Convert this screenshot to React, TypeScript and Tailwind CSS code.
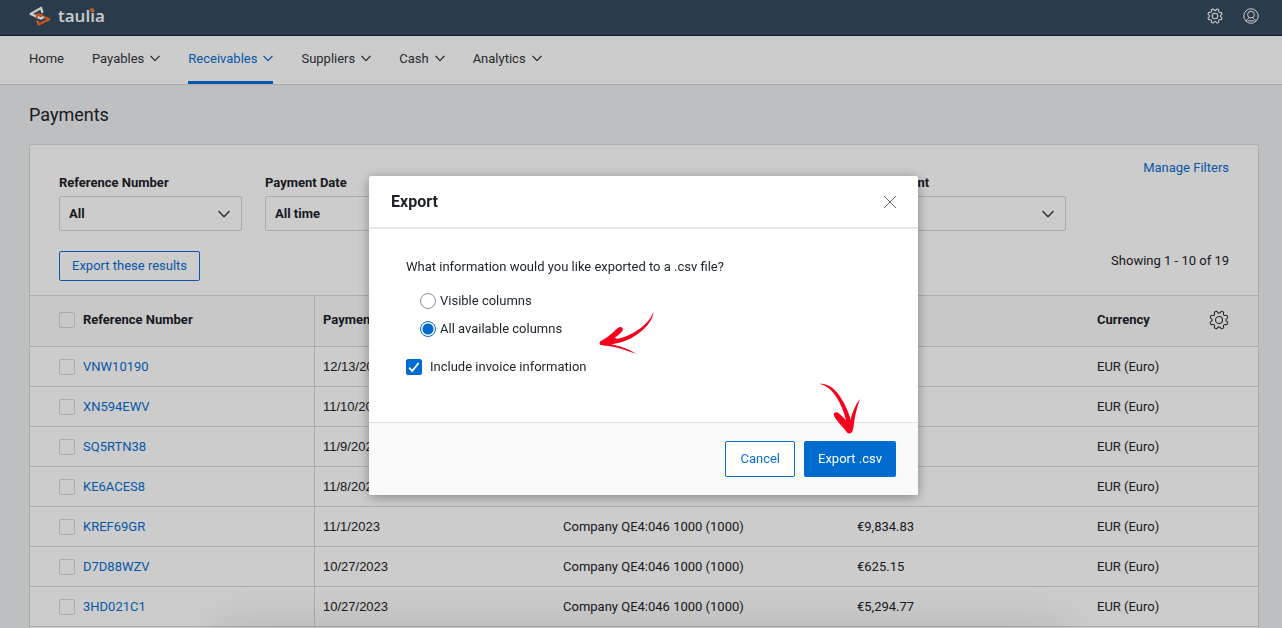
import { useState } from "react";
import clsx from "clsx";

interface Payment {
  reference: string;
  date: string;
  customer?: string;
  amount?: string;
  currency: string;
}

interface NavItem {
  label: string;
  menu: boolean;
}

const company = "Company QE4:046 1000 (1000)";
const euro = "EUR (Euro)";

const payments: Payment[] = [
  { reference: "VNW10190", date: "12/13/2023", currency: euro },
  { reference: "XN594EWV", date: "11/10/2023", currency: euro },
  { reference: "SQ5RTN38", date: "11/9/2023", currency: euro },
  { reference: "KE6ACES8", date: "11/8/2023", currency: euro },
  { reference: "KREF69GR", date: "11/1/2023", customer: company, amount: "€9,834.83", currency: euro },
  { reference: "D7D88WZV", date: "10/27/2023", customer: company, amount: "€625.15", currency: euro },
  { reference: "3HD021C1", date: "10/27/2023", customer: company, amount: "€5,294.77", currency: euro },
];

const navItems: NavItem[] = [
  { label: "Home", menu: false },
  { label: "Payables", menu: true },
  { label: "Receivables", menu: true },
  { label: "Suppliers", menu: true },
  { label: "Cash", menu: true },
  { label: "Analytics", menu: true },
];

const filters = [
  { id: "reference", label: "Reference Number", value: "All" },
  { id: "date", label: "Payment Date", value: "All time" },
  { id: "customer", label: "Customer", value: "All" },
  { id: "currency", label: "Currency", value: "All" },
  { id: "amount", label: "Amount", value: "All" },
];

const Chevron = ({ className }: { className?: string }) => (
  <svg viewBox="0 0 12 8" fill="none" stroke="currentColor" strokeLinecap="round" strokeLinejoin="round" className={className}>
    <path d="M1 1.500 6 6.700l5-5.200" strokeWidth="1.4" />
  </svg>
);

// eight teeth with a notch at the top
const gearPath = () => {
  const point = (deg: number, r: number) => {
    const a = (deg * Math.PI) / 180;
    return `${(12 + r * Math.cos(a)).toFixed(2)} ${(12 + r * Math.sin(a)).toFixed(2)}`;
  };
  let d = "";
  for (let i = 0; i < 8; i++) {
    const c = 22.5 + i * 45;
    d += `${i === 0 ? "M" : "L"}${point(c - 12, 9.4)}`;
    d += `Q${point(c - 11, 11)} ${point(c - 6, 11)}L${point(c + 6, 11)}Q${point(c + 11, 11)} ${point(c + 12, 9.4)}`;
    d += `Q${point(c + 22.5, 7.2)} ${point(c + 33, 9.4)}`;
  }
  return d + "Z";
};

const Gear = ({ className, strokeWidth }: { className?: string; strokeWidth: number }) => (
  <svg viewBox="0 0 24 24" fill="none" stroke="currentColor" strokeWidth={strokeWidth} strokeLinejoin="round" className={className}>
    <path d={gearPath()} />
    <circle cx="12" cy="12" r="4.2" />
  </svg>
);

const Logo = () => (
  <a href="#" className="flex items-center gap-[7px] text-white">
    <svg viewBox="0 0 22 20" fill="none" strokeLinejoin="round" className="h-5 w-[22px]">
      <path d="M8.200 14.500 9.800 18.600 20.200 13.200 8.600 8.200" stroke="#f4702b" strokeWidth="2.3" />
      <path d="M13.600 6.800 12 1.900 1.600 7.900l10.600 4.700 2.400-1.500" stroke="#ffffff" strokeWidth="2.3" />
      <path d="m7.600 12.600.8-4.400 5.200.8" stroke="#f4702b" strokeWidth="2" />
    </svg>
    <span className="font-['Open_Sans',sans-serif] text-[17px] leading-5 font-semibold">
      taul
      <span className="relative">
        i<span className="absolute top-1 left-0 size-1 rounded-full bg-[#f4702b]" />
      </span>
      a
    </span>
  </a>
);

const Header = () => (
  <header className="flex h-9 items-start justify-between border-b border-[#0c2a45] bg-[#354a5f] pt-1.5 pr-[23px] pl-[29px]">
    <Logo />
    <div className="flex gap-5 pt-0.5 text-white">
      <button type="button" aria-label="Settings">
        <Gear className="size-4" strokeWidth={1.6} />
      </button>
      <button type="button" aria-label="Account">
        <svg viewBox="0 0 16 16" fill="none" stroke="currentColor" className="size-4">
          <circle cx="8" cy="8" r="7.2" />
          <circle cx="8" cy="6.6" r="3.4" />
          <path d="M3.4 13.4C4 11 5.4 10.4 6.4 9.8M12.6 13.4c-.6-2.4-2-3-3-3.6M5 12.8h6" />
        </svg>
      </button>
    </div>
  </header>
);

const Nav = () => (
  <nav className="flex h-[49px] gap-7 border-b border-[#d9d9d9] bg-white pl-[29px]">
    {navItems.map((item) => {
      const active = item.label === "Receivables";
      return (
        <a
          key={item.label}
          href="#"
          className={clsx(
            "flex items-center gap-1.5 border-b-3",
            active ? "border-[#0a6ed1] text-[#0a6ed1]" : "border-transparent text-[#32363a]"
          )}
        >
          {item.label}
          {item.menu && <Chevron className="w-2.5" />}
        </a>
      );
    })}
  </nav>
);

const Filters = () => (
  <div className="flex items-start justify-between px-[29px] pt-3.5">
    <div className="flex gap-[23px] pt-[15px]">
      {filters.map((filter) => (
        <div key={filter.id} className="w-[183px]">
          <label htmlFor={filter.id} className="block font-bold">
            {filter.label}
          </label>
          <div className="relative mt-1">
            <select
              id={filter.id}
              className="h-[35px] w-full appearance-none rounded-xs border border-[#d5d5d5] px-[9px] font-bold"
            >
              <option>{filter.value}</option>
            </select>
            <Chevron className="pointer-events-none absolute top-3.5 right-3 w-3 text-[#32363a]" />
          </div>
        </div>
      ))}
    </div>
    <a href="#" className="text-[#0a6ed1]">
      Manage Filters
    </a>
  </div>
);

const Checkbox = ({ label }: { label: string }) => (
  <input
    type="checkbox"
    aria-label={label}
    className="size-4 shrink-0 appearance-none rounded-xs border border-[#d9d9d9]"
  />
);

const PaymentsTable = () => (
  <table className="mt-3.5 w-full table-fixed border-separate border-spacing-0 text-left">
    <colgroup>
      <col className="w-[285px]" />
      <col className="w-[240px]" />
      <col className="w-[294px]" />
      <col className="w-[240px]" />
      <col />
    </colgroup>
    <thead>
      <tr className="h-[51px] bg-[#fafafa] [&>th]:border-t [&>th]:border-[#d9d9d9] [&>th]:px-2 [&>th]:pb-0.5">
        <th className="border-r">
          <div className="flex items-center gap-2 pl-[21px]">
            <Checkbox label="Select all payments" />
            Reference Number
          </div>
        </th>
        <th>Payment Date</th>
        <th>Customer</th>
        <th>Amount</th>
        <th>
          <div className="flex items-center justify-between pr-[21px]">
            Currency
            <button type="button" aria-label="Table settings" className="text-[#32363a]">
              <Gear className="size-5" strokeWidth={1.3} />
            </button>
          </div>
        </th>
      </tr>
    </thead>
    <tbody>
      {payments.map((payment) => (
        <tr
          key={payment.reference}
          className="h-10 last:h-[41px] [&>td]:border-t [&>td]:border-[#d9d9d9] [&>td]:px-2 last:[&>td]:border-b"
        >
          <td className="border-r">
            <div className="flex items-center gap-2 pl-[21px]">
              <Checkbox label={`Select ${payment.reference}`} />
              <a href="#" className="text-[#0a6ed1]">
                {payment.reference}
              </a>
            </div>
          </td>
          <td className="font-['Liberation_Sans',sans-serif]">{payment.date}</td>
          <td>{payment.customer}</td>
          <td>{payment.amount}</td>
          <td>{payment.currency}</td>
        </tr>
      ))}
    </tbody>
  </table>
);

const ExportDialog = () => {
  const [columns, setColumns] = useState("all");
  const [invoices, setInvoices] = useState(true);
  const options = [
    { value: "visible", label: "Visible columns" },
    { value: "all", label: "All available columns" },
  ];
  return (
    <div className="fixed inset-0 flex items-start justify-center overflow-hidden bg-black/20 pt-44 pl-[5px]">
      <div
        role="dialog"
        aria-labelledby="export-title"
        className="relative w-[549px] rounded-xs bg-white shadow-[0_2px_12px_rgba(0,0,0,0.35)]"
      >
        <div className="flex h-[53px] items-center justify-between border-b-2 border-[#e8e8e8] pr-[21px] pl-[22px]">
          <h2 id="export-title" className="text-base font-bold">
            Export
          </h2>
          <button type="button" aria-label="Close">
            <svg viewBox="0 0 14 14" stroke="#6a6d70" className="size-3.5">
              <path d="m1 1 12 12M13 1 1 13" />
            </svg>
          </button>
        </div>
        <div className="h-[193px] px-[37px] pt-[29px]">
          <p>What information would you like exported to a .csv file?</p>
          <div className="mt-4 flex flex-col gap-2.5 pl-3.5">
            {options.map((option) => (
              <label key={option.value} className="flex items-center gap-1">
                <input
                  type="radio"
                  name="columns"
                  checked={columns === option.value}
                  onChange={() => setColumns(option.value)}
                  className="size-4 appearance-none rounded-full border border-[#89919a] bg-white checked:border-[#0a6ed1] checked:bg-[radial-gradient(circle,#006cd0_0_5px,transparent_6px)]"
                />
                {option.label}
              </label>
            ))}
          </div>
          <label className="mt-5 flex items-center gap-2">
            <span className="relative flex">
              <input
                type="checkbox"
                checked={invoices}
                onChange={() => setInvoices(!invoices)}
                className="size-4 appearance-none rounded-xs border border-[#89919a] checked:border-[#006cd0] checked:bg-[#006cd0]"
              />
              {invoices && (
                <svg viewBox="0 0 16 16" fill="none" stroke="#ffffff" strokeWidth="1.8" className="pointer-events-none absolute inset-0">
                  <path d="m3.2 8.6 3 3.4 6.4-8" />
                </svg>
              )}
            </span>
            Include invoice information
          </label>
        </div>
        <div className="flex h-[73px] items-center justify-end gap-[9px] rounded-b-xs border-t border-[#e0e0e0] bg-[#fafafa] pr-[22px]">
          <button type="button" className="h-9 rounded-xs border border-[#0a6ed1] bg-white px-3.5 text-[#0a6ed1]">
            Cancel
          </button>
          <button type="button" className="h-9 rounded-xs bg-[#006cd0] px-3.5 text-white">
            Export .csv
          </button>
        </div>

        {/* hand drawn pointers */}
        <svg viewBox="0 0 56 44" fill="#f5001d" className="pointer-events-none absolute top-[135px] left-[230px] w-14">
          <path d="M54.3.8C54.8 9 45 19.500 35 25.500 26 31 16 33.200 8 33.800L5 29.500C17 29 26 26.500 34 22 44 16.500 52 9 54.300.8Z" />
          <path d="M1 30.500C6 27.500 12 24 17.500 18 19.500 16 21 15.500 22.500 16.200 24.500 17.200 24 19.300 22.800 20.800 20.500 23.500 17 26 13 28.500L10 32.800C20 34.800 30 38 37.500 43 28 39.800 18 36 8 34.800 5.500 34.500 3 34.800 1.500 34 .6 33 .4 31.500 1 30.500Z" />
          <path d="M2 31 14 25l4 3-7 5z" />
        </svg>
        <svg viewBox="0 0 44 52" fill="#f5001d" className="pointer-events-none absolute top-[207px] left-[450px] w-11">
          <path d="M.3.800C10 0 17 7 22 15 27 23 30.500 31 32.500 40L28 42C26.500 34 24 26 20 18.500 15 9.500 9 2.500.3.800Z" />
          <path d="M28.500 50C25 45 20.500 41 16.500 35.500 15 33 14.300 31.500 15 30.300 16.200 28.800 18.500 28.800 20 30.500 23 33 26 36 28 38.500L31.500 37C33 30 36 22 41 16 37.500 25 35.500 35 34.500 44 34 47 33.500 49 32 50 31 50.500 29.500 50.500 28.500 50Z" />
        </svg>
      </div>
      <div className="absolute -bottom-5 left-1/2 h-2 w-[820px] -translate-x-1/2 shadow-[0_0_50px_20px_rgba(0,0,0,0.1)]" />
    </div>
  );
};

export default function App() {
  return (
    <div className="flex min-h-screen flex-col bg-[#edeff1] font-[Roboto,sans-serif] text-[13px] leading-[18px] text-[#1d2328]">
      <Header />
      <Nav />
      <main className="flex flex-1 flex-col pr-[23px] pl-[29px]">
        <h1 className="pt-[18px] pb-[17px] text-lg leading-6">Payments</h1>
        <section className="flex-1 rounded-t-xs border border-b-0 border-[#d9d9d9] bg-white">
          <Filters />
          <div className="mt-5 flex items-start justify-between px-[29px]">
            <button type="button" className="h-[30px] rounded-xs border border-[#0a6ed1] px-3 text-[#0a6ed1]">
              Export these results
            </button>
            <span className="pt-px">Showing 1 - 10 of 19</span>
          </div>
          <PaymentsTable />
        </section>
      </main>
      <ExportDialog />
    </div>
  );
}
